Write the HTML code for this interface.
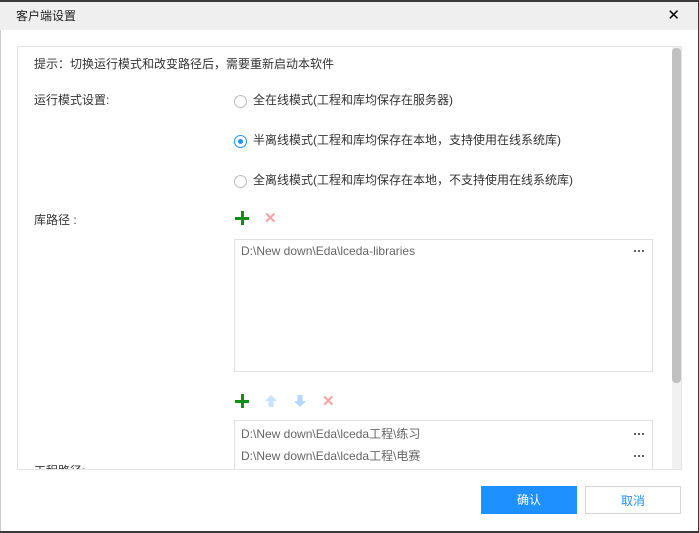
<!DOCTYPE html>
<html><head><meta charset="utf-8"><style>
*{margin:0;padding:0;box-sizing:border-box}
body{width:699px;height:533px;overflow:hidden;background:#3a3a3a;position:relative;font-family:"Liberation Sans","Noto Sans CJK SC",sans-serif;font-size:12px;color:#333}
.win{position:absolute;left:0;top:2px;width:698px;height:529px;background:#fff;box-shadow:inset 1px 0 0 #ccc}
.title{position:absolute;left:0;top:0;width:100%;height:28px;background:#efefef;font-size:12px;line-height:28px;padding-left:16px;color:#222}
.x{position:absolute;right:18px;top:0;font-size:15px;line-height:28px;color:#000}
.panel{position:absolute;left:17px;top:44px;width:665px;height:424px;border:1px solid #e4e4e4;overflow:hidden}
.t{position:absolute;white-space:nowrap;line-height:16px}
.radio{position:absolute;width:13px;height:13px;border:1px solid #bbb;border-radius:50%}
.radio.on{border-color:#1e90ff}
.radio.on::after{content:"";position:absolute;left:3px;top:3px;width:5px;height:5px;border-radius:50%;background:#1e90ff}
.box{position:absolute;left:216px;width:419px;border:1px solid #e0e0e0;color:#666}
.dots{position:absolute;right:8px;width:11px;height:2px;background:radial-gradient(circle,#555 1px,transparent 1.2px) 0 0/4px 2px repeat-x}
.sb{position:absolute;left:654px;top:0;width:9px;height:424px;background:#f1f1f1}
.th{position:absolute;left:0;top:1px;width:9px;height:335px;background:#c1c1c1;border-radius:4px}
.btn{position:absolute;top:484px;width:96px;height:28px;text-align:center;line-height:28px;font-size:12px}
.plus{position:absolute;width:14px;height:14px}
.plus::before{content:"";position:absolute;left:0;top:6px;width:14px;height:3px;background:#109010}
.plus::after{content:"";position:absolute;left:6px;top:0;width:3px;height:14px;background:#109010}
</style></head><body>
<div class="win">
<div class="title">客户端设置<span class="x">✕</span></div>
<div class="panel">
<div class="t" style="left:16px;top:9px">提示：切换运行模式和改变路径后，需要重新启动本软件</div>
<div class="t" style="left:16px;top:45px">运行模式设置:</div>
<div class="radio" style="left:216px;top:48px"></div><div class="t" style="left:235px;top:45px">全在线模式(工程和库均保存在服务器)</div>
<div class="radio on" style="left:216px;top:88px"></div><div class="t" style="left:235px;top:85px">半离线模式(工程和库均保存在本地，支持使用在线系统库)</div>
<div class="radio" style="left:216px;top:128px"></div><div class="t" style="left:235px;top:125px">全离线模式(工程和库均保存在本地，不支持使用在线系统库)</div>
<div class="t" style="left:16px;top:165px">库路径 :</div>
<div class="plus" style="left:217px;top:164px"></div>
<div class="t" style="left:246px;top:164px;color:#f7a3a3;font-size:15px;font-weight:bold">✕</div>
<div class="box" style="top:192px;height:133px"><div class="t" style="left:6px;top:3px">D:\New down\Eda\lceda-libraries</div><div class="dots" style="top:10px"></div></div>
<div class="plus" style="left:217px;top:347px"></div>
<svg style="position:absolute;left:247px;top:348px" width="12" height="12"><path d="M6 0L12 6H8.5V12H3.5V6H0Z" fill="#c6e2ff"/></svg>
<svg style="position:absolute;left:276px;top:348px" width="12" height="12"><path d="M3.5 0H8.5V6H12L6 12L0 6H3.5Z" fill="#b3d7ff"/></svg>
<div class="t" style="left:304px;top:347px;color:#f7a3a3;font-size:15px;font-weight:bold">✕</div>
<div class="box" style="top:373px;height:60px"><div class="t" style="left:6px;top:5px">D:\New down\Eda\lceda工程\练习</div><div class="dots" style="top:12px"></div><div class="t" style="left:6px;top:27px">D:\New down\Eda\lceda工程\电赛</div><div class="dots" style="top:34px"></div></div>
<div class="t" style="left:16px;top:416px">工程路径:</div>
<div class="sb"><div class="th"></div></div>
</div>
<div class="btn" style="left:481px;background:#1e90ff;color:#fff">确认</div>
<div class="btn" style="left:585px;border:1px solid #d5d5d5;color:#1e90ff">取消</div>
</div>
</body></html>
